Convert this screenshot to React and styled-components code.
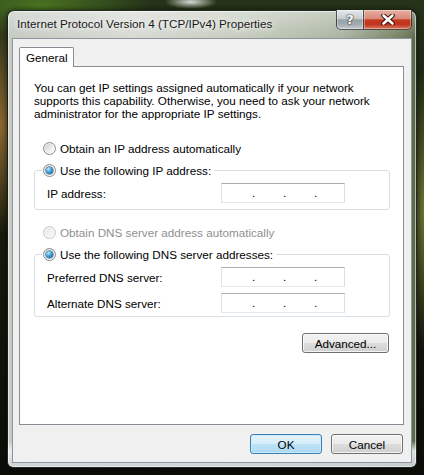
import React from 'react';
import styled, { createGlobalStyle } from 'styled-components';

const Global = createGlobalStyle`
  html, body { margin: 0; padding: 0; }
  body {
    width: 424px;
    height: 475px;
    overflow: hidden;
    font-family: "Liberation Sans", Arial, sans-serif;
    background:
      radial-gradient(ellipse 26px 7px at 191px 2px, rgba(225,228,222,0.95), rgba(225,228,222,0) 100%),
      radial-gradient(ellipse 70px 110px at 0px 125px, rgba(160,115,55,0.85), rgba(160,115,55,0) 100%),
      radial-gradient(ellipse 110px 30px at 40px 6px, rgba(80,125,35,0.9), rgba(80,125,35,0) 100%),
      radial-gradient(ellipse 22px 140px at 424px 210px, rgba(120,125,55,0.9), rgba(120,125,55,0) 100%),
      linear-gradient(180deg, #26351a 0%, #18200f 35%, #0b0d09 100%);
  }
`;

const Window = styled.div`
  box-sizing: border-box;
  margin: 10px 0 0 7px;
  width: 410px;
  height: 458px;
  padding: 0 4px 4px 4px;
  display: flex;
  flex-direction: column;
  border: 1px solid rgba(18, 22, 16, 0.9);
  border-radius: 7px 7px 6px 6px;
  box-shadow: inset 0 0 0 1px rgba(255, 255, 255, 0.55), 0 0 6px rgba(0, 0, 0, 0.6);
  background:
    linear-gradient(180deg, rgba(255,255,255,0.35) 0px, rgba(255,255,255,0) 28px),
    linear-gradient(180deg, rgba(0,0,0,0) 430px, rgba(235,240,242,0.9) 440px, rgba(200,206,210,0.9) 458px),
    linear-gradient(90deg, #c3c9c1 0%, #d6dad3 30%, #c4cbbd 58%, #a9b3a0 82%, #6f7c5c 97%, #5a6646 100%);
`;

const TitleBar = styled.div`
  flex: none;
  height: 27px;
  display: flex;
  align-items: flex-start;
  justify-content: space-between;
`;

const Title = styled.div`
  margin: 6px 0 0 5px;
  font-size: 11.7px;
  line-height: 14px;
  color: #1a1a1a;
  white-space: nowrap;
  text-shadow: 0 0 5px rgba(255, 255, 255, 0.95), 0 0 10px rgba(255, 255, 255, 0.85);
`;

const Caption = styled.div`
  display: flex;
  margin-top: -1px;
`;

const CaptionButton = styled.div`
  box-sizing: border-box;
  height: 20px;
  width: ${p => (p.$close ? 48 : 28)}px;
  display: flex;
  align-items: center;
  justify-content: center;
  border: 1px solid rgba(35, 35, 35, 0.75);
  border-top: none;
  ${p => (p.$close ? 'border-left: none;' : '')}
  border-radius: ${p => (p.$close ? '0 0 5px 0' : '0 0 0 5px')};
  box-shadow: inset 0 0 0 1px rgba(255, 255, 255, 0.35);
  background: ${p =>
    p.$close
      ? 'linear-gradient(180deg, #e7b1a4 0%, #d98a78 45%, #c63b23 52%, #c0331c 75%, #d67a5c 100%)'
      : 'linear-gradient(180deg, #e6e9eb 0%, #c6ccd0 45%, #98a1a7 52%, #a4adb2 78%, #c4cccf 100%)'};
  color: #fff;
  font-family: "DejaVu Sans", sans-serif;
  font-weight: bold;
  font-size: 13px;
  text-shadow: 0 0 2px #2a2a2a, 0 0 1px #000;
`;

const Client = styled.div`
  flex: 1;
  display: flex;
  flex-direction: column;
  background: #f0f0f0;
  border: 1px solid #8d949b;
  padding: 8px 7px 8px 6px;
  font-size: 11.7px;
  color: #000;
`;

const TabStrip = styled.div`
  display: flex;
  margin-bottom: -1px;
  position: relative;
  z-index: 1;
`;

const Tab = styled.div`
  box-sizing: border-box;
  height: 20px;
  padding: 0 5px 0 6px;
  display: flex;
  align-items: center;
  background: #fff;
  border: 1px solid #898c95;
  border-bottom: none;
  border-radius: 2px 2px 0 0;
`;

const Panel = styled.div`
  flex: 1;
  display: flex;
  flex-direction: column;
  background: #fff;
  border: 1px solid #898c95;
  padding: 0 13px 0 14px;
`;

const Intro = styled.p`
  margin: 14px 0 0 0;
  line-height: 13px;
  white-space: nowrap;
`;

const RadioRow = styled.div`
  display: flex;
  align-items: center;
  gap: 4px;
  height: 16px;
  margin-top: ${p => p.$top || 0}px;
  padding-left: ${p => p.$indent || 0}px;
  color: ${p => (p.$disabled ? '#8f8f8f' : '#000')};
  white-space: nowrap;
`;

const RadioCircle = styled.span`
  box-sizing: border-box;
  flex: none;
  width: 13px;
  height: 13px;
  border-radius: 50%;
  display: flex;
  align-items: center;
  justify-content: center;
  border: 1px solid ${p => (p.$disabled ? '#c4c4c4' : '#8a8b8b')};
  background: ${p =>
    p.$disabled
      ? 'linear-gradient(135deg, #e8e8e8, #f8f8f8)'
      : 'linear-gradient(135deg, #c9c9c9 0%, #ececec 55%, #ffffff 100%)'};
  box-shadow: inset 0 0 0 1px rgba(255, 255, 255, 0.65);
  &::after {
    content: '';
    display: ${p => (p.$checked ? 'block' : 'none')};
    width: 7px;
    height: 7px;
    border-radius: 50%;
    background: radial-gradient(circle at 35% 30%, #c4ecff 0%, #49a6dc 40%, #0d4f84 100%);
    box-shadow: 0 0 0 0.5px #1c4f75;
  }
`;

const Group = styled.fieldset`
  margin: 6px 0 0 0;
  padding: 5px 0 ${p => p.$bottom}px 7px;
  border: 1px solid #d5dfe5;
  border-radius: 3px;
  min-width: 0;
`;

const Legend = styled.legend`
  padding: 0 3px 0 1px;
  margin: 0;
`;

const Fields = styled.div`
  display: flex;
  flex-direction: column;
  gap: 6px;
`;

const FieldRow = styled.div`
  display: flex;
  align-items: center;
  height: 20px;
  padding-left: 5px;
`;

const FieldLabel = styled.span`
  width: 174px;
  flex: none;
  white-space: nowrap;
`;

const IpBox = styled.div`
  box-sizing: border-box;
  width: 124px;
  height: 20px;
  display: flex;
  align-items: center;
  padding-left: 2px;
  background: #fff;
  border: 1px solid;
  border-color: #abadb3 #dbdfe6 #e3e9ef #e2e3ea;
`;

const IpSegment = styled.span`
  width: 28px;
  height: 100%;
  flex: none;
`;

const IpDot = styled.span`
  width: 3px;
  flex: none;
  text-align: center;
  line-height: 18px;
`;

const Button = styled.div`
  box-sizing: border-box;
  width: ${p => p.$w}px;
  height: 20px;
  display: flex;
  align-items: center;
  justify-content: center;
  border-radius: 3px;
  border: 1px solid ${p => (p.$default ? '#3c7fb1' : '#707070')};
  background: ${p =>
    p.$default
      ? 'linear-gradient(180deg, #e5f4fc 0%, #d5edfa 49%, #bfe3f7 50%, #add8f1 100%)'
      : 'linear-gradient(180deg, #f2f2f2 0%, #ebebeb 49%, #dddddd 50%, #cfcfcf 100%)'};
  box-shadow: inset 0 0 0 1px ${p => (p.$default ? 'rgba(200,235,255,0.9)' : 'rgba(255,255,255,0.75)')};
  white-space: nowrap;
`;

const AdvancedWrap = styled.div`
  display: flex;
  justify-content: flex-end;
  margin: 16px 1px 0 0;
`;

const Footer = styled.div`
  display: flex;
  justify-content: flex-end;
  gap: 9px;
  margin: 9px 1px 0 0;
`;

const CloseGlyph = () => (
  <svg width="14" height="11" viewBox="0 0 14 11">
    <path d="M2.5 1.5 L11.5 9.5 M11.5 1.5 L2.5 9.5" stroke="#3b1208" strokeWidth="4.6" strokeLinecap="round" />
    <path d="M2.5 1.5 L11.5 9.5 M11.5 1.5 L2.5 9.5" stroke="#ffffff" strokeWidth="2.6" strokeLinecap="round" />
  </svg>
);

const Radio = ({ checked, disabled, indent, top, children }) => (
  <RadioRow $indent={indent} $top={top} $disabled={disabled}>
    <RadioCircle $checked={checked} $disabled={disabled} />
    <span>{children}</span>
  </RadioRow>
);

const IpField = ({ label }) => (
  <FieldRow>
    <FieldLabel>{label}</FieldLabel>
    <IpBox>
      <IpSegment />
      <IpDot>.</IpDot>
      <IpSegment />
      <IpDot>.</IpDot>
      <IpSegment />
      <IpDot>.</IpDot>
      <IpSegment />
    </IpBox>
  </FieldRow>
);

export default function App() {
  return (
    <>
      <Global />
      <Window>
        <TitleBar>
          <Title>Internet Protocol Version 4 (TCP/IPv4) Properties</Title>
          <Caption>
            <CaptionButton>?</CaptionButton>
            <CaptionButton $close>
              <CloseGlyph />
            </CaptionButton>
          </Caption>
        </TitleBar>
        <Client>
          <TabStrip>
            <Tab>General</Tab>
          </TabStrip>
          <Panel>
            <Intro>
              You can get IP settings assigned automatically if your network
              <br />
              supports this capability. Otherwise, you need to ask your network
              <br />
              administrator for the appropriate IP settings.
            </Intro>
            <Radio indent={9} top={20}>Obtain an IP address automatically</Radio>
            <Group $bottom={6}>
              <Legend>
                <Radio checked>Use the following IP address:</Radio>
              </Legend>
              <Fields>
                <IpField label="IP address:" />
              </Fields>
            </Group>
            <Radio indent={9} top={14} disabled>Obtain DNS server address automatically</Radio>
            <Group $bottom={3}>
              <Legend>
                <Radio checked>Use the following DNS server addresses:</Radio>
              </Legend>
              <Fields>
                <IpField label="Preferred DNS server:" />
                <IpField label="Alternate DNS server:" />
              </Fields>
            </Group>
            <AdvancedWrap>
              <Button $w={87}>Advanced...</Button>
            </AdvancedWrap>
          </Panel>
          <Footer>
            <Button $w={72} $default>OK</Button>
            <Button $w={72}>Cancel</Button>
          </Footer>
        </Client>
      </Window>
    </>
  );
}
